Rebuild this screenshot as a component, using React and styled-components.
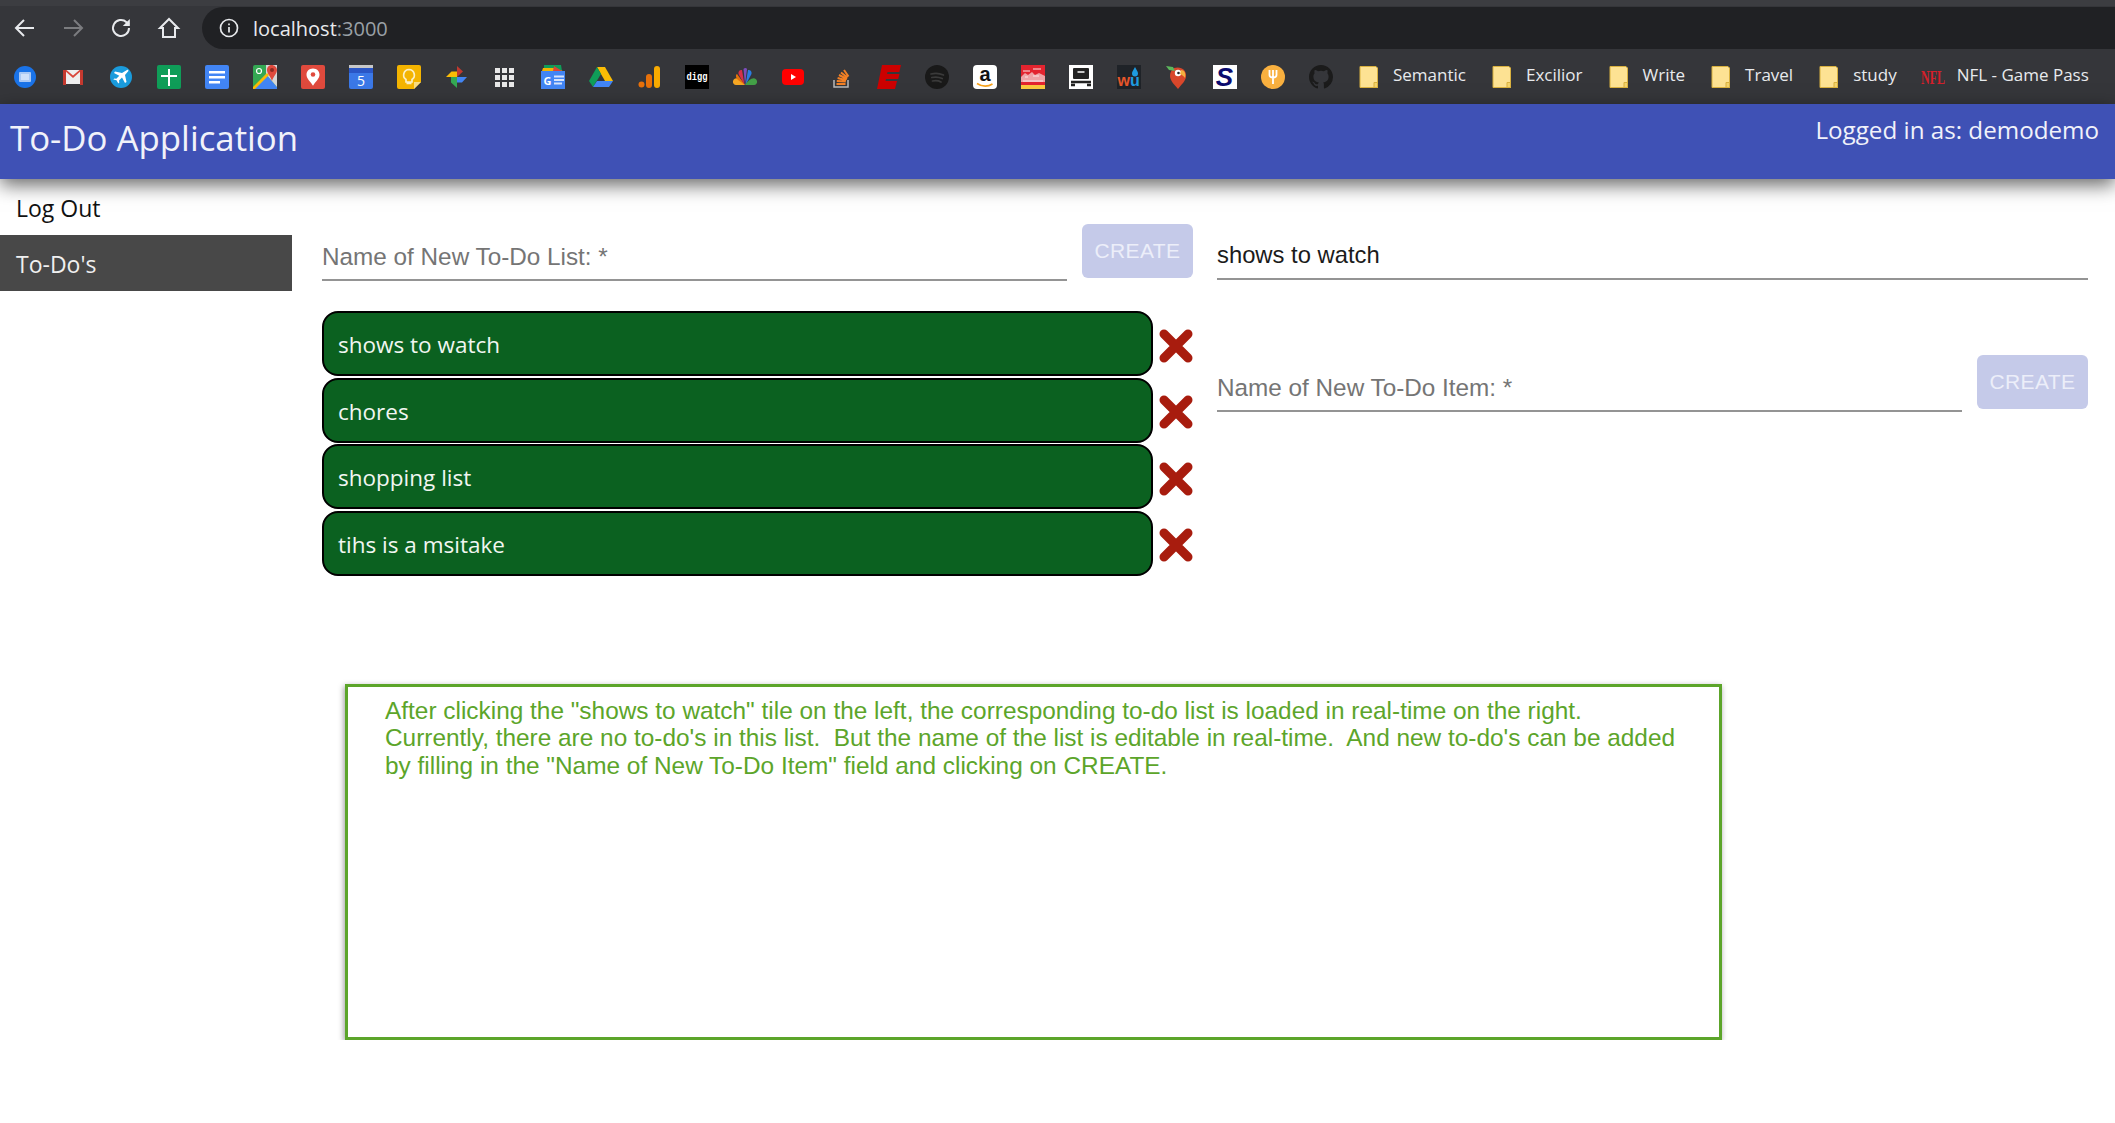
import React from 'react'
import styled, { createGlobalStyle } from 'styled-components'

const GlobalStyle = createGlobalStyle`
  html, body {
    margin: 0;
    padding: 0;
    background: #fff;
  }
  body {
    font-family: 'Open Sans', 'Noto Sans', sans-serif;
    overflow: hidden;
  }
`

const lists = ['shows to watch', 'chores', 'shopping list', 'tihs is a msitake']

const Svg = ({ children }) => (
  <svg width="24" height="24" viewBox="0 0 24 24" overflow="visible">
    {children}
  </svg>
)

const appIcons = [
  // chat
  <>
    <circle cx="12" cy="12" r="11" fill="#1a73e8" />
    <rect x="6" y="7" width="12" height="10" rx="1" fill="#a9c8f5" />
    <rect x="8" y="9" width="8" height="6" fill="#cfe0fa" />
  </>,
  // gmail
  <>
    <rect x="3" y="5" width="18" height="14" fill="#eeeeee" />
    <path d="M3 5h2.500L12 10.500 18.500 5H21l-9 8z" fill="#d9463a" />
    <path d="M2 5h3v15H2zM19 5h3v15h-3z" fill="#c5392f" />
  </>,
  // flights
  <>
    <circle cx="12" cy="12" r="11" fill="#1a9bdc" />
    <path d="M18 5c1-.6 1.800.2 1.200 1.200L16 10l1.500 7-1.500 1-3-5.500-3 3 .3 2-1 1-1.800-3.200L4.300 14.500l1-1 2 .3 3-3L5 8l1-1.500 7 1.500z" fill="#fff" />
  </>,
  // sheets
  <>
    <rect width="24" height="24" rx="2" fill="#0f9d58" />
    <path d="M11 4h2v6h7v2h-7v9h-2v-9H4v-2h7z" fill="#fff" />
  </>,
  // docs
  <>
    <rect width="24" height="24" rx="2" fill="#4285f4" />
    <path d="M4 6h16v2.500H4zM4 11h16v2.500H4zM4 16h11v2.500H4z" fill="#fff" />
  </>,
  // maps
  <>
    <rect width="24" height="24" rx="2" fill="#34a853" />
    <path d="M0 24 13 9l11 13v2z" fill="#4285f4" />
    <path d="M13 9l11 13V0H13z" fill="#d6d6d6" />
    <path d="M0 22 14 8l2 2L2 24H0z" fill="#fbbc04" />
    <path d="M18.500 0c3 0 5.500 2.200 5.500 5 0 3.500-3.500 6-5 11-1.500-5-5-7.500-5-11 0-2.800 2-5 4.500-5z" fill="#e04a3d" />
    <circle cx="19" cy="5" r="2" fill="#8e2a22" />
    <circle cx="6" cy="6" r="2.500" fill="none" stroke="#fff" strokeWidth="1.200" />
  </>,
  // pin
  <>
    <rect width="24" height="24" rx="2" fill="#e04a3d" />
    <path d="M12 3.500c4 0 6.500 2.800 6.500 6.300 0 4-4.500 7.500-6.500 11-2-3.500-6.500-7-6.500-11 0-3.500 2.500-6.300 6.500-6.300z" fill="#fff" />
    <circle cx="12" cy="9.500" r="2.300" fill="#e04a3d" />
  </>,
  // calendar
  <>
    <rect width="24" height="24" rx="2" fill="#3b78e7" />
    <path d="M0 3h24v5H0z" fill="#2a56c6" />
    <rect width="24" height="3" fill="#c7c7c7" />
    <text x="12" y="20.500" textAnchor="middle" fontFamily="Open Sans" fontSize="14" fill="#fff">5</text>
  </>,
  // keep
  <>
    <path d="M2 0h20a2 2 0 0 1 2 2v15l-7 7H2a2 2 0 0 1-2-2V2a2 2 0 0 1 2-2z" fill="#f4b400" />
    <path d="M24 17h-7v7z" fill="#f8dc84" />
    <path d="M12 4.500a5.500 5.500 0 0 1 3 10v2.500H9v-2.500a5.500 5.500 0 0 1 3-10zM9.500 18.500h5" fill="none" stroke="#fbefc4" strokeWidth="1.700" />
  </>,
  // photos
  <>
    <path d="M12 12V1l6 5.500z" fill="#c0392f" />
    <path d="M12 12h10l-5 5.500H12z" fill="#4285f4" />
    <path d="M12 12v11l-6-5.500V12z" fill="#34a853" />
    <path d="M12 12H1l5.500-5.500H12z" fill="#fbbc04" />
  </>,
  // apps grid
  <>
    {[3, 10, 17].flatMap((y) =>
      [2, 9, 16].map((x) => <rect key={`${x}-${y}`} x={x} y={y} width="5" height="5" fill="#e8e8e8" />)
    )}
  </>,
  // news
  <>
    <path d="M3 0h17l1 6H3z" fill="#0f9d58" />
    <path d="M2 3h10l10 3H1z" fill="#f4b400" />
    <path d="M13 1l8 5h-9z" fill="#db4437" />
    <rect y="6" width="24" height="18" fill="#4285f4" />
    <text x="6.500" y="19.500" textAnchor="middle" fontFamily="Open Sans" fontWeight="700" fontSize="11" fill="#fff">G</text>
    <path d="M13 10.500h10v2H13zM13 14h10v2H13zM13 17.500h8v2h-8z" fill="#d7e4fb" />
  </>,
  // drive
  <>
    <path d="M8 2h8l8 14h-8z" fill="#fbbc04" />
    <path d="M8 2l4 7-8 13-4-6z" fill="#0f9d58" />
    <path d="M8 16h16l-4 6H4z" fill="#4285f4" />
  </>,
  // analytics
  <>
    <circle cx="4.500" cy="19.500" r="3" fill="#e8710a" />
    <rect x="9" y="9" width="6" height="14" rx="3" fill="#e8710a" />
    <rect x="17" y="1" width="6" height="22" rx="3" fill="#f9ab00" />
  </>,
  // digg
  <>
    <rect width="24" height="24" fill="#000" />
    <text x="1.500" y="15" fontFamily="Liberation Mono" fontWeight="700" fontSize="11" textLength="21" lengthAdjust="spacingAndGlyphs" fill="#fff">digg</text>
  </>,
  // nbc
  <>
    <path d="M12 20C9 15 2 10 0 16c-.5 2 1 4 3 4z" fill="#f5a623" />
    <path d="M12 20 4 9C2 10 3 13 5 15z" fill="#e8710a" />
    <path d="M11.500 20 9 5c-2-.5-4 1-3.500 4z" fill="#d6304a" />
    <path d="M12 20l-1.500-16c1-1.500 3-1.500 3.500 0z" fill="#7c4dbd" />
    <path d="M12.500 20 15 5c2-.5 4 1 3.500 4z" fill="#2a7de1" />
    <path d="M12 20C15 15 22 10 24 16c.5 2-1 4-3 4z" fill="#43a047" />
  </>,
  // youtube
  <>
    <rect x="1" y="4" width="22" height="16" rx="4" fill="#f00" />
    <path d="M10 9l5 3-5 3z" fill="#fff" />
  </>,
  // stack overflow
  <>
    <path d="M5 15v7h14v-7" fill="none" stroke="#b9b9b9" strokeWidth="1.500" />
    <path d="M7.500 19h9M7.800 16l9 .6M8.600 13l8.500 2.200M10 10l8 4M12 7.500l6.500 5M15 5l4.500 6.500" stroke="#f48024" strokeWidth="2" fill="none" />
  </>,
  // espn
  <path d="M5 0h19l-1.700 7H10.500L10 9h12.500l-1.300 5H9l-.5 2H20l-2 8H0z" fill="#cc0000" />,
  // spotify
  <>
    <circle cx="12" cy="12" r="12" fill="#191919" />
    <path d="M6 9c4-1 8.500-.8 12.500 1M6.800 12.500c3.500-.8 7.200-.5 10.500 1M7.500 16c3-.6 6-.4 8.500 1" fill="none" stroke="#3a3a3a" strokeWidth="1.700" strokeLinecap="round" />
  </>,
  // amazon
  <>
    <rect width="24" height="24" rx="4" fill="#fff" />
    <text x="12" y="16" textAnchor="middle" fontFamily="Liberation Sans" fontWeight="700" fontSize="20" fill="#111">a</text>
    <path d="M4 18.500c5 3.200 11 3.200 15.500.5" fill="none" stroke="#f7a21b" strokeWidth="1.600" />
  </>,
  // red site
  <>
    <rect width="24" height="20" fill="#e3242f" />
    <rect y="20" width="24" height="4" fill="#f9c93e" />
    <path d="M0 12l4-4 3 2 4-3 3 3 4-2 6 3v6H0z" fill="#efa3a6" />
    <path d="M2 6h7M12 4h8M2 16h20M4 12h3M12 11h6" stroke="#fbe5e5" strokeWidth="1" />
  </>,
  // cpu box
  <>
    <rect width="24" height="24" fill="#fff" />
    <rect x="4" y="3" width="16" height="11" rx="1" fill="#222" />
    <path d="M8.500 7h7" stroke="#fff" strokeWidth="1.500" />
    <path d="M2 17h20M2 20h4M18 20h4" stroke="#222" strokeWidth="2.500" />
  </>,
  // wunderground
  <>
    <rect width="24" height="24" fill="#1f2328" />
    <path d="M18 2c1.500 3 3 4.500 3 6.500a3 3 0 0 1-6 0C15 6.500 16.500 5 18 2z" fill="#1e9be0" />
    <text x="0.500" y="21" fontFamily="Liberation Sans" fontWeight="700" fontSize="16" fill="#e5562a">w</text>
    <text x="13" y="21" fontFamily="Liberation Sans" fontWeight="700" fontSize="16" fill="#1e9be0">u</text>
  </>,
  // parrot
  <>
    <path d="M9 3c7-2 13 2 12 9-.6 4-4 7-8 12-3-4-8-8-8-13 0-3 1-6 4-8z" fill="#d9472b" />
    <path d="M1 1l7 1 2 4-6-1z" fill="#5cb85c" />
    <circle cx="13" cy="8" r="3.200" fill="#fff" />
    <circle cx="13.500" cy="8" r="1.300" fill="#222" />
    <path d="M16 5c4 0 5 4 4 8-1-2-3-3-5-4z" fill="#f4b03e" />
  </>,
  // s logo
  <>
    <rect width="24" height="24" fill="#fff" />
    <text x="11.500" y="21" textAnchor="middle" fontFamily="Liberation Sans" fontWeight="700" fontStyle="italic" fontSize="26" fill="#0a0a6e">S</text>
  </>,
  // fork
  <>
    <circle cx="12" cy="12" r="12" fill="#f9b03f" />
    <path d="M8.500 5v5c0 1.500 1.500 2.500 3.500 2.500s3.500-1 3.500-2.500V5M12 5v14" fill="none" stroke="#fff" strokeWidth="1.800" />
  </>,
  // github
  <path
    d="M12 0C5.400 0 0 5.400 0 12c0 5.300 3.400 9.800 8.200 11.400.6.100.8-.3.800-.6v-2c-3.300.7-4-1.600-4-1.600-.5-1.400-1.300-1.800-1.300-1.800-1.100-.7.100-.7.100-.7 1.200.1 1.800 1.200 1.800 1.200 1.100 1.800 2.800 1.300 3.500 1 .1-.8.400-1.300.8-1.600-2.700-.3-5.500-1.300-5.500-5.900 0-1.300.5-2.400 1.200-3.200-.1-.3-.5-1.500.1-3.200 0 0 1-.3 3.300 1.200a11.500 11.500 0 0 1 6 0c2.300-1.500 3.300-1.200 3.300-1.200.6 1.700.2 2.900.1 3.200.8.800 1.200 1.900 1.200 3.200 0 4.600-2.800 5.600-5.500 5.900.4.400.8 1.100.8 2.200v3.300c0 .3.200.7.800.6A12 12 0 0 0 24 12C24 5.400 18.600 0 12 0z"
    fill="#1b1b1b"
  />,
]

const FolderIcon = () => (
  <Svg>
    <path d="M3 1.500h16l1.500 1.500v19.500H3z" fill="#fde293" stroke="#d9b13f" strokeWidth="1" />
    <path d="M17 22.500v-5h3.500v5z" fill="#f4d36b" stroke="#d9b13f" strokeWidth="1" />
  </Svg>
)

const NflIcon = () => (
  <Svg>
    <text x="0" y="18.500" fontFamily="Liberation Serif" fontWeight="700" fontSize="19" textLength="24" lengthAdjust="spacingAndGlyphs" fill="#d4202a">NFL</text>
  </Svg>
)

const App = () => (
  <>
    <GlobalStyle />
    <Chrome>
      <Toolbar>
        <NavButton>
          <svg width="24" height="24" viewBox="0 0 24 24" fill="none" stroke="currentColor" strokeWidth="2">
            <path d="M21 12H4M11 4l-8 8 8 8" />
          </svg>
        </NavButton>
        <NavButton $disabled>
          <svg width="24" height="24" viewBox="0 0 24 24" fill="none" stroke="currentColor" strokeWidth="2">
            <path d="M3 12h17M13 4l8 8-8 8" />
          </svg>
        </NavButton>
        <NavButton>
          <svg width="24" height="24" viewBox="0 0 24 24" fill="none" stroke="currentColor" strokeWidth="2">
            <path d="M20 12a8 8 0 1 1-2.500-5.800L20 8.500" />
            <path d="M20.800 3v7h-7z" fill="currentColor" stroke="none" />
          </svg>
        </NavButton>
        <NavButton>
          <svg width="24" height="24" viewBox="0 0 24 24" fill="none" stroke="currentColor" strokeWidth="2">
            <path d="M12 3 3 12h3v9h12v-9h3z" />
          </svg>
        </NavButton>
        <AddressBar>
          <svg width="20" height="20" viewBox="0 0 20 20" fill="none" stroke="#e8eaed" strokeWidth="1.700">
            <circle cx="10" cy="10" r="8.500" />
            <path d="M10 9v5.500M10 5.500v1.800" />
          </svg>
          <UrlText>
            localhost<UrlPort>:3000</UrlPort>
          </UrlText>
        </AddressBar>
      </Toolbar>
      <BookmarkBar>
        {appIcons.map((icon, index) => (
          <Svg key={index}>{icon}</Svg>
        ))}
        {['Semantic', 'Excilior', 'Write', 'Travel', 'study'].map((name) => (
          <Bookmark key={name}>
            <FolderIcon />
            <BookmarkLabel>{name}</BookmarkLabel>
          </Bookmark>
        ))}
        <Bookmark>
          <NflIcon />
          <BookmarkLabel>NFL - Game Pass</BookmarkLabel>
        </Bookmark>
      </BookmarkBar>
    </Chrome>

    <AppBar>
      <AppTitle>To-Do Application</AppTitle>
      <UserName>Logged in as: demodemo</UserName>
    </AppBar>

    <Page>
      <Sidebar>
        <NavItem>Log Out</NavItem>
        <NavItem $active>To-Do's</NavItem>
      </Sidebar>

      <Main>
        <Columns>
          <ListColumn>
            <ListFormRow>
              <Field>
                <Placeholder>Name of New To-Do List: *</Placeholder>
              </Field>
              <CreateButton>CREATE</CreateButton>
            </ListFormRow>
            <TileList>
              {lists.map((name) => (
                <TileRow key={name}>
                  <Tile>{name}</Tile>
                  <RemoveIcon width="36" height="36" viewBox="0 0 36 36">
                    <path d="M6 6l24 24M30 6 6 30" stroke="#a81c0e" strokeWidth="9" strokeLinecap="round" />
                  </RemoveIcon>
                </TileRow>
              ))}
            </TileList>
          </ListColumn>

          <DetailColumn>
            <TitleField>shows to watch</TitleField>
            <ItemRow>
              <Field>
                <Placeholder>Name of New To-Do Item: *</Placeholder>
              </Field>
              <CreateButton>CREATE</CreateButton>
            </ItemRow>
          </DetailColumn>
        </Columns>

        <Note>
          After clicking the "shows to watch" tile on the left, the corresponding to-do list is loaded in real-time on
          the right.
          <br />
          Currently, there are no to-do's in this list.&nbsp; But the name of the list is editable in real-time.&nbsp;
          And new to-do's can be added
          <br />
          by filling in the "Name of New To-Do Item" field and clicking on CREATE.
        </Note>
      </Main>
    </Page>
  </>
)

const Chrome = styled.div`
  background: #35363a;
  height: 104px;
  border-top: 6px solid #3c3d41;
  box-sizing: border-box;
`

const Toolbar = styled.div`
  display: flex;
  align-items: center;
  height: 44px;
  padding-left: 13px;
`

const NavButton = styled.div`
  display: flex;
  width: 24px;
  height: 24px;
  margin-right: 24px;
  color: ${({ $disabled }) => ($disabled ? '#7b7c7f' : '#e8eaed')};
`

const AddressBar = styled.div`
  flex: 1;
  display: flex;
  align-items: center;
  gap: 14px;
  height: 42px;
  margin-left: -3px;
  padding-left: 17px;
  background: #202124;
  border-radius: 21px 0 0 21px;
`

const UrlText = styled.span`
  font-size: 20px;
  color: #e8eaed;
`

const UrlPort = styled.span`
  color: #9aa0a6;
`

const BookmarkBar = styled.div`
  display: flex;
  align-items: center;
  gap: 24px;
  height: 54px;
  padding-left: 13px;
  white-space: nowrap;
`

const Bookmark = styled.div`
  display: flex;
  align-items: center;
  gap: 12px;
  font-size: 17px;
  color: #e8eaed;
`

const BookmarkLabel = styled.span`
  padding-bottom: 5px;
`

const AppBar = styled.header`
  position: relative;
  display: flex;
  justify-content: space-between;
  height: 75px;
  padding: 0 16px 0 10px;
  background: #3f51b5;
  color: #f1f2fa;
  box-shadow: 0 6px 18px rgba(0, 0, 0, 0.6);
`

const AppTitle = styled.div`
  font-size: 34.800px;
  line-height: 68px;
`

const UserName = styled.div`
  font-size: 24.200px;
  line-height: 52px;
`

const Page = styled.div`
  display: flex;
`

const Sidebar = styled.nav`
  width: 292px;
  flex: none;
`

const NavItem = styled.div`
  height: 56px;
  padding-left: 16px;
  font-size: 23px;
  line-height: 58px;
  color: ${({ $active }) => ($active ? '#f0f0f0' : '#111')};
  background: ${({ $active }) => ($active ? '#484848' : 'transparent')};
`

const Main = styled.main`
  flex: 1;
  padding: 45px 27px 0 30px;
`

const Columns = styled.div`
  display: flex;
  gap: 23px;
`

const ListColumn = styled.div`
  width: 872px;
  flex: none;
`

const DetailColumn = styled.div`
  flex: 1;
`

const FormRow = styled.div`
  display: flex;
  align-items: flex-start;
  gap: 15px;
`

const ListFormRow = styled(FormRow)`
  padding-right: 1px;
`

const ItemRow = styled(FormRow)`
  margin-top: 75px;
`

const Field = styled.div`
  flex: 1;
  height: 57px;
  border-bottom: 2px solid #949494;
  box-sizing: border-box;
`

const Placeholder = styled.div`
  padding-top: 19px;
  font-family: 'Liberation Sans', Arial, sans-serif;
  font-size: 24.300px;
  line-height: 27px;
  color: #757575;
`

const TitleField = styled(Field)`
  padding-top: 17px;
  height: 56px;
  font-family: 'Liberation Sans', Arial, sans-serif;
  font-size: 23.800px;
  line-height: 27px;
  color: #1b1b1b;
`

const CreateButton = styled.button`
  flex: none;
  width: 111px;
  height: 54px;
  padding: 0;
  border: none;
  border-radius: 6px;
  background: #c5cae9;
  color: #eceef9;
  font-family: 'Liberation Sans', Arial, sans-serif;
  font-size: 21px;
  letter-spacing: 0.4px;
`

const TileList = styled.div`
  display: flex;
  flex-direction: column;
  gap: 1.500px;
  margin-top: 30px;
`

const TileRow = styled.div`
  display: flex;
  align-items: center;
  gap: 5px;
`

const Tile = styled.div`
  flex: 1;
  height: 65px;
  box-sizing: border-box;
  padding-left: 14px;
  border: 2px solid #000;
  border-radius: 16px;
  background: #0b6120;
  color: #f1f6f1;
  font-size: 22.500px;
  line-height: 64px;
`

const RemoveIcon = styled.svg`
  flex: none;
  margin-top: 4px;
`

const Note = styled.div`
  width: 1377px;
  height: 356px;
  box-sizing: border-box;
  margin: 108px 0 0 23px;
  padding: 10px 37px;
  border: 3px solid #5ca52a;
  box-shadow: -1px 2px 6px rgba(0, 0, 0, 0.4);
  font-family: 'Liberation Sans', Arial, sans-serif;
  font-size: 24.400px;
  line-height: 27.500px;
  color: #5ca52a;
  white-space: nowrap;
`

export default App
